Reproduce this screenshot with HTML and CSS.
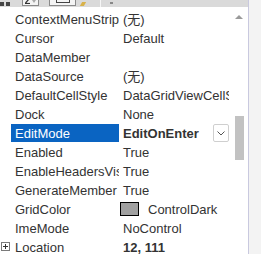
FILE: index.html
```html
<!DOCTYPE html>
<html>
<head>
<meta charset="utf-8">
<link rel="stylesheet" href="styles.css">
</head>
<body>
<div class="page">
  <div class="grid">
    <div class="toolbar">
      <div class="tb-icon tb-cat"><span></span><span></span></div>
      <div class="tb-btn tb-sel"><svg width="13" height="6" viewBox="0 0 13 6"><path d="M1 5.5 H6" stroke="#333" stroke-width="1.2"/><path d="M5 1 L1.5 5" stroke="#333" stroke-width="1.2"/><path d="M8 2 L10 5 L12 2 Z" fill="#aaa"/></svg></div>
      <div class="tb-btn tb-pages"><span class="lines"></span></div>
      <div class="tb-pencil"></div>
      <div class="tb-sep"></div>
      <div class="tb-drop"></div>
    </div>
    <div class="body">
      <div class="rows">
        <div class="row"><div class="m"></div><div class="name">ContextMenuStrip</div><div class="val">(无)</div></div>
        <div class="row"><div class="m"></div><div class="name">Cursor</div><div class="val">Default</div></div>
        <div class="row"><div class="m"></div><div class="name">DataMember</div><div class="val"></div></div>
        <div class="row"><div class="m"></div><div class="name">DataSource</div><div class="val">(无)</div></div>
        <div class="row"><div class="m"></div><div class="name">DefaultCellStyle</div><div class="val">DataGridViewCellStyle { }</div></div>
        <div class="row"><div class="m"></div><div class="name">Dock</div><div class="val">None</div></div>
        <div class="row sel"><div class="m"></div><div class="name">EditMode</div><div class="val bold">EditOnEnter<span class="dd"><svg width="8" height="5" viewBox="0 0 8 5"><path d="M0.5 0.5 L4 4 L7.5 0.5" fill="none" stroke="#555" stroke-width="1"/></svg></span></div></div>
        <div class="row"><div class="m"></div><div class="name">Enabled</div><div class="val">True</div></div>
        <div class="row"><div class="m"></div><div class="name">EnableHeadersVisualStyles</div><div class="val">True</div></div>
        <div class="row"><div class="m"></div><div class="name">GenerateMember</div><div class="val">True</div></div>
        <div class="row"><div class="m"></div><div class="name">GridColor</div><div class="val"><span class="swatch"></span>ControlDark</div></div>
        <div class="row"><div class="m"></div><div class="name">ImeMode</div><div class="val">NoControl</div></div>
        <div class="row"><div class="m"><span class="plus"></span></div><div class="name">Location</div><div class="val bold">12, 111</div></div>
      </div>
      <div class="scroll">
        <div class="up"></div>
        <div class="thumb"></div>
      </div>
    </div>
  </div>
</div>
</body>
</html>
```
FILE: styles.css
```css
html, body {
  margin: 0;
  padding: 0;
}
body {
  width: 261px;
  height: 254px;
  overflow: hidden;
  background: #f3f3f3;
  font-family: "Liberation Sans", "Noto Sans CJK SC", sans-serif;
  font-size: 13px;
  color: #333;
}
.page {
  display: flex;
  height: 254px;
}
.grid {
  width: 248px;
  height: 254px;
  background: #fff;
  border-right: 1px solid #c9c9df;
  overflow: hidden;
}
.toolbar {
  height: 7px;
  background: #dadada;
  display: flex;
  align-items: flex-end;
  overflow: hidden;
}
.tb-icon, .tb-btn, .tb-pencil, .tb-sep, .tb-drop {
  flex: none;
}
.tb-cat {
  width: 10px;
  height: 4px;
  margin-bottom: 1px;
  display: flex;
  gap: 2px;
}
.tb-cat span {
  display: block;
  width: 4px;
  height: 4px;
  background: #444;
}
.tb-btn {
  height: 14px;
  box-sizing: border-box;
  border: 1px solid #8a8a8a;
  background: #f4f4f4;
  margin-bottom: 1px;
}
.tb-sel {
  width: 17px;
  margin-left: 12px;
  display: flex;
  align-items: flex-end;
  justify-content: center;
  padding-bottom: 1px;
}
.tb-pages {
  width: 27px;
  margin-left: 10px;
  display: flex;
  align-items: flex-end;
  justify-content: center;
}
.tb-pages .lines {
  display: block;
  width: 12px;
  height: 3px;
  border: 1px solid #444;
  border-top: none;
  margin-bottom: 2px;
}
.tb-pencil {
  width: 4px;
  height: 4px;
  background: #d8b24a;
  margin-left: 5px;
  margin-bottom: 1px;
  transform: skewX(-30deg);
}
.tb-sep {
  width: 1px;
  height: 7px;
  background: #f6f6f6;
  margin-left: 15px;
}
.tb-drop {
  width: 3px;
  height: 2px;
  background: #888;
  margin-left: 9px;
  margin-bottom: 3px;
}
.body {
  display: flex;
  margin-top: 3px;
}
.rows {
  width: 231px;
  flex: none;
}
.row {
  display: flex;
  height: 19px;
}
.m {
  width: 11px;
  flex: none;
  position: relative;
}
.name {
  width: 104px;
  flex: none;
  padding-left: 4px;
  height: 18px;
  line-height: 19px;
  white-space: nowrap;
  overflow: hidden;
}
.val {
  flex: 1;
  min-width: 0;
  margin-left: 1px;
  padding-left: 3px;
  margin-right: 2px;
  height: 18px;
  line-height: 19px;
  white-space: nowrap;
  overflow: hidden;
  display: flex;
  align-items: flex-start;
}
.bold {
  font-weight: bold;
}
.sel .name {
  background: #0a64c2;
  color: #fff;
}
.dd {
  margin-left: auto;
  width: 16px;
  height: 18px;
  box-sizing: border-box;
  border: 1px solid #cfcfcf;
  border-radius: 2px;
  background: #fff;
  display: flex;
  align-items: center;
  justify-content: center;
}
.swatch {
  flex: none;
  width: 19px;
  height: 14px;
  box-sizing: border-box;
  border: 1px solid #000;
  background: #a0a0a0;
  margin-left: -3px;
  margin-top: 2px;
  margin-right: 9px;
}
.plus {
  position: absolute;
  left: 1px;
  top: 4px;
  width: 9px;
  height: 9px;
  box-sizing: border-box;
  border: 1px solid #7a7a7a;
  background: #fff;
}
.plus::before, .plus::after {
  content: "";
  position: absolute;
  background: #333;
}
.plus::before {
  left: 1px;
  top: 3px;
  width: 5px;
  height: 1px;
}
.plus::after {
  left: 3px;
  top: 1px;
  width: 1px;
  height: 5px;
}
.scroll {
  width: 17px;
  flex: none;
  display: flex;
  flex-direction: column;
  align-items: center;
}
.up {
  width: 0;
  height: 0;
  border-left: 4px solid transparent;
  border-right: 4px solid transparent;
  border-bottom: 4px solid #9a9a9a;
  margin-top: 5px;
  margin-left: -1px;
}
.thumb {
  width: 9px;
  height: 44px;
  background: #c2c2c2;
  margin-top: 97px;
  margin-left: -1px;
}
```
